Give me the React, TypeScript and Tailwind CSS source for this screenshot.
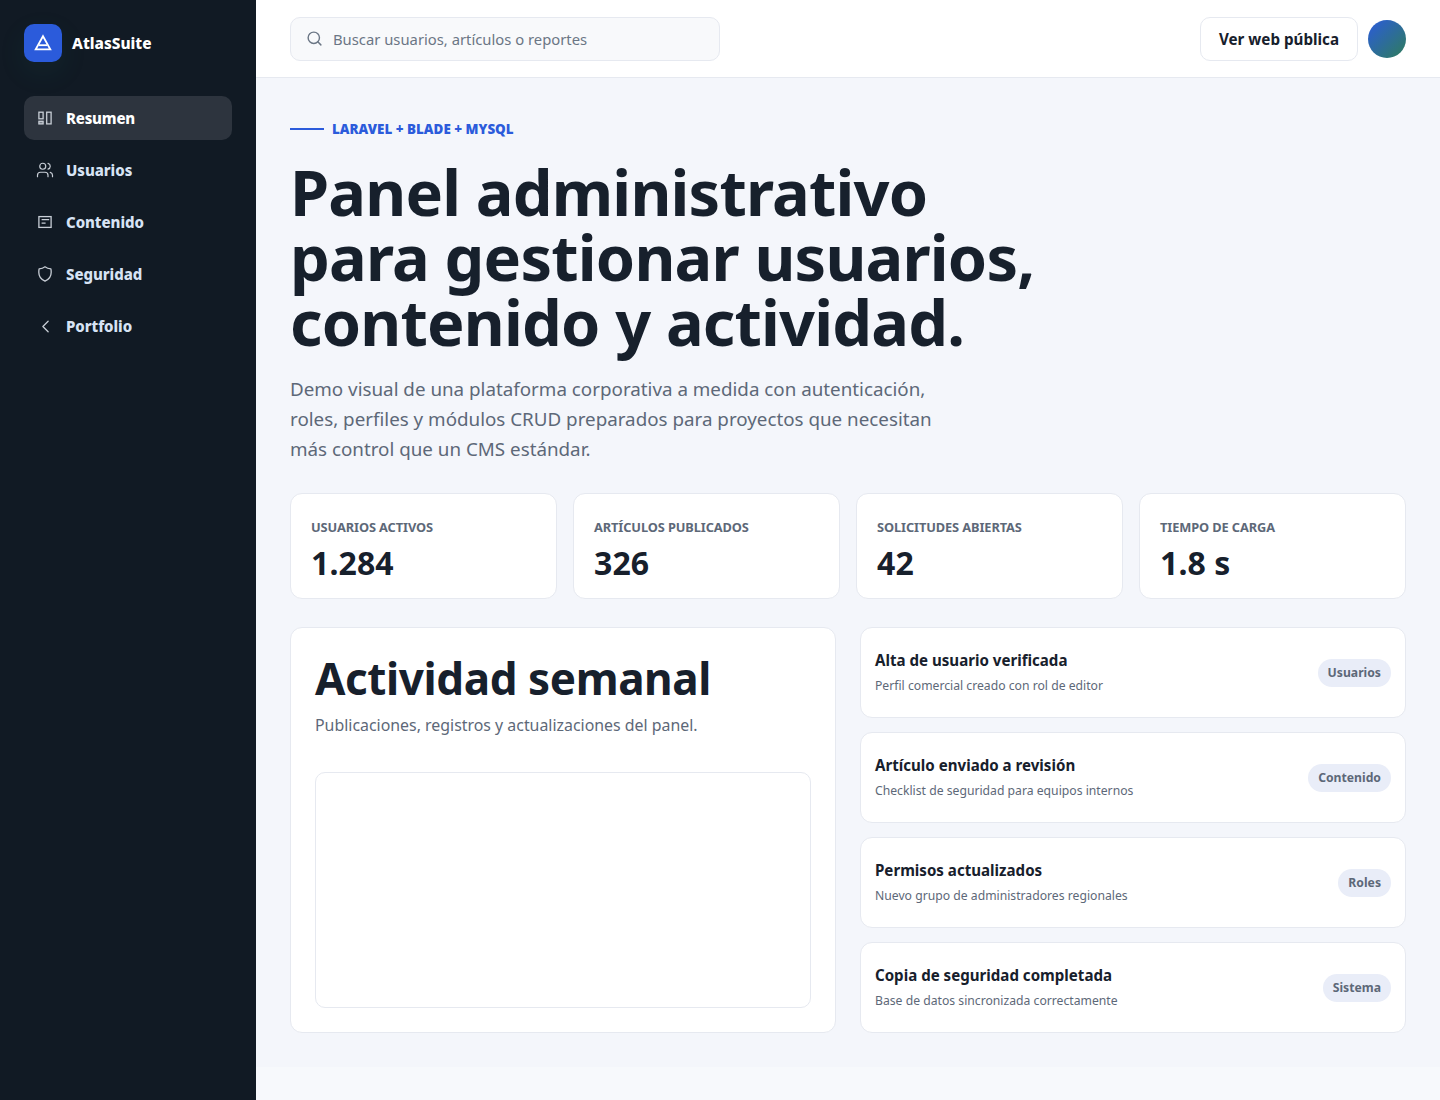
import { Search, Users, ChevronLeft } from 'lucide-react';

const stats = [
  { label: 'USUARIOS ACTIVOS', value: '1.284' },
  { label: 'ARTÍCULOS PUBLICADOS', value: '326' },
  { label: 'SOLICITUDES ABIERTAS', value: '42' },
  { label: 'TIEMPO DE CARGA', value: '1.8 s' },
];

const activity = [
  { title: 'Alta de usuario verificada', text: 'Perfil comercial creado con rol de editor', tag: 'Usuarios' },
  { title: 'Artículo enviado a revisión', text: 'Checklist de seguridad para equipos internos', tag: 'Contenido' },
  { title: 'Permisos actualizados', text: 'Nuevo grupo de administradores regionales', tag: 'Roles' },
  { title: 'Copia de seguridad completada', text: 'Base de datos sincronizada correctamente', tag: 'Sistema' },
];

function PanelIcon() {
  return (
    <svg width="14" height="14" viewBox="0 0 14 14" fill="none" stroke="currentColor" strokeWidth="1.3">
      <rect x="0.9" y="1.2" width="4.2" height="6.6" />
      <rect x="0.9" y="10.3" width="4.2" height="2.6" fill="currentColor" fillOpacity="0.5" />
      <rect x="8.7" y="1.2" width="4.4" height="11.7" />
    </svg>
  );
}

function ContentIcon() {
  return (
    <svg width="14" height="14" viewBox="0 0 14 14" fill="none" stroke="currentColor" strokeWidth="1.3">
      <rect x="0.9" y="1.6" width="12.2" height="10.8" />
      <path d="M3.6 4.6h7.6M3.6 8.2h4" />
    </svg>
  );
}

function ShieldIcon() {
  return (
    <svg width="14" height="16" viewBox="0 0 14 16" fill="none" stroke="currentColor" strokeWidth="1.3" strokeLinejoin="round">
      <path d="M7 .8c1.6 1.3 3.6 2 5.9 2.1.2 1 .3 2.2.3 3.4 0 4-2.2 7.2-6.2 8.9C3 13.500.8 10.300.8 6.300c0-1.200.1-2.400.3-3.400C3.400 2.800 5.400 2.100 7 .8Z" />
    </svg>
  );
}

export default function App() {
  const nav = [
    { label: 'Resumen', icon: <PanelIcon />, active: true },
    { label: 'Usuarios', icon: <Users size={18} strokeWidth={1.6} className="shrink-0" /> },
    { label: 'Contenido', icon: <ContentIcon /> },
    { label: 'Seguridad', icon: <ShieldIcon /> },
    { label: 'Portfolio', icon: <ChevronLeft size={21} strokeWidth={1.5} className="shrink-0" /> },
  ];

  return (
    <div className="flex min-h-[1100px] bg-[#f7f9fc] font-['Noto_Sans',sans-serif] text-[#17202c]">
      <aside className="w-64 shrink-0 bg-[#111a24] px-6 pt-6">
        <div className="flex items-center gap-2.5">
          <div className="flex h-[38px] w-[38px] items-center justify-center rounded-[10px] bg-[#2b5bdb] shadow-[0_10px_30px_rgba(43,160,130,0.08)]">
            <svg width="18" height="18" viewBox="0 0 18 18" fill="none" stroke="#fff" strokeWidth="1.8">
              <path d="M9 2.2 16.300 15.400H1.700Z" />
              <path d="M5 11.200h8" />
            </svg>
          </div>
          <span className="pt-0.5 text-[15.4px] font-extrabold text-white">AtlasSuite</span>
        </div>
        <nav className="mt-[34px] flex flex-col gap-2">
          {nav.map((item) => (
            <a
              key={item.label}
              className={`flex h-11 items-center gap-3.5 rounded-[10px] px-3.5 text-[15px] font-extrabold ${
                item.active ? 'bg-[#2d343e] tracking-[-0.2px] text-white' : 'tracking-[-0.05px] text-[#d7e3f4]'
              }`}
            >
              <span className="flex w-3.5 justify-center text-[#c8ced6]">{item.icon}</span>
              {item.label}
            </a>
          ))}
        </nav>
      </aside>

      <div className="flex min-w-0 flex-1 flex-col">
        <header className="flex h-[78px] items-center justify-between border-b border-[#e6e9f0] bg-white px-[34px]">
          <div className="flex h-11 w-[430px] items-center gap-[10px] rounded-[10px] border border-[#e6e9f0] bg-[#f8f9fb] px-[15px] text-[14.8px] text-[#6b7685]">
            <Search size={17} strokeWidth={2} className="shrink-0" />
            <span className="pt-0.5">Buscar usuarios, artículos o reportes</span>
          </div>
          <div className="flex items-center gap-2.5">
            <button className="h-11 rounded-[10px] border border-[#e6e9f0] bg-white px-[18px] pt-0.5 text-[15.2px] font-bold text-[#17202c]">
              Ver web pública
            </button>
            <div className="h-[38px] w-[38px] rounded-full bg-linear-to-br/srgb from-[#2b5bdb] to-[#2f7d5b]" />
          </div>
        </header>

        <main className="bg-[#f4f6fb] px-[34px] pt-[41px] pb-[34px]">
          <div className="flex items-center gap-2">
            <span className="h-0.5 w-[34px] bg-[#2b5bdb]" />
            <span className="text-[13.4px] leading-[20px] font-black text-[#2b5bdb]">LARAVEL + BLADE + MYSQL</span>
          </div>
          <h1 className="mt-5 max-w-[760px] text-[63px] leading-[65px] font-bold tracking-[-0.8px]">
            Panel administrativo para gestionar usuarios, contenido y actividad.
          </h1>
          <p className="mt-5 max-w-[650px] text-[18.8px] leading-[30px] text-[#5d6878]">
            Demo visual de una plataforma corporativa a medida con autenticación, roles, perfiles y módulos CRUD preparados para proyectos que necesitan más control que un CMS estándar.
          </p>

          <div className="mt-[29px] grid grid-cols-4 gap-4">
            {stats.map((stat) => (
              <div key={stat.label} className="h-[106px] rounded-xl border border-[#e6e9f0] bg-white px-5 pt-[23px]">
                <div className="text-[12.8px] leading-5 font-bold tracking-[-0.1px] text-[#5d6878]">{stat.label}</div>
                <div className="mt-1.5 text-[32px] leading-[40px] font-bold tracking-[0.1px]">{stat.value}</div>
              </div>
            ))}
          </div>

          <div className="mt-7 grid grid-cols-2 gap-6">
            <section className="flex h-[406px] flex-col rounded-xl border border-[#e6e9f0] bg-white p-6">
              <h2 className="text-[44px] leading-[52px] font-bold tracking-[-0.4px]">Actividad semanal</h2>
              <p className="mt-[7px] text-[15.9px] leading-7 text-[#5d6878]">Publicaciones, registros y actualizaciones del panel.</p>
              <div className="mt-[33px] flex-1 rounded-[10px] border border-[#e6e9f0]" />
            </section>

            <div className="flex flex-col gap-3.5">
              {activity.map((item) => (
                <div key={item.title} className="flex h-[91px] items-center justify-between rounded-xl border border-[#e6e9f0] bg-white px-3.5">
                  <div className="pb-0.5">
                    <div className="text-[15.1px] leading-6 font-bold">{item.title}</div>
                    <div className="mt-1 text-[12.2px] leading-5 text-[#5d6878]">{item.text}</div>
                  </div>
                  <span className="rounded-full bg-[#e9edf8] px-2.5 py-1 text-[12.2px] leading-5 font-bold text-[#5d6878]">{item.tag}</span>
                </div>
              ))}
            </div>
          </div>
        </main>
      </div>
    </div>
  );
}
